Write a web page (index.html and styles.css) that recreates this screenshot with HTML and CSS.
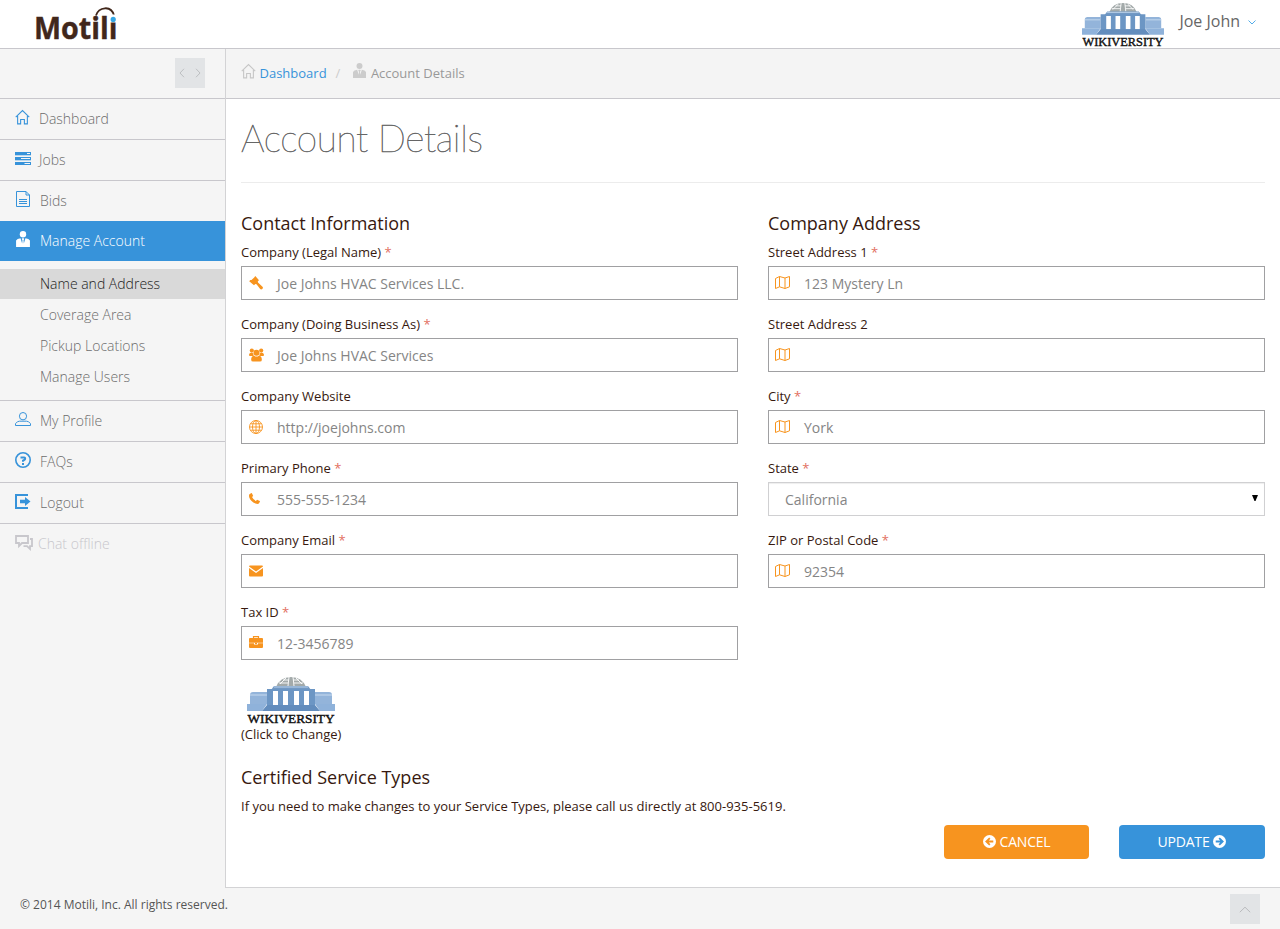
FILE: index.html
```html
<!DOCTYPE html>
<html lang="en">
<head>
<meta charset="utf-8">
<title>Account Details</title>
<link rel="stylesheet" href="styles.css">
</head>
<body>
<svg class="sprite" aria-hidden="true">
  <symbol id="home" viewBox="0 0 16 16"><path d="M.8 8.200 8 1.100l7.200 7.100M2.800 6.800V15.300H6V10.600H10V15.300h3.200V6.800" fill="none" stroke="currentColor" stroke-width="1.150"/></symbol>
  <symbol id="jobs" viewBox="0 0 16 13"><path d="M0 0h16v3H0zM0 5h16v3H0zM0 10h16v3H0z" fill="currentColor"/><path d="M0 3.500h16M0 8.500h16" stroke="currentColor" opacity=".3"/><path d="M12 1.500h3M6 6.500h9M9.500 11.500H15" stroke="#f5f5f5"/></symbol>
  <symbol id="doc" viewBox="0 0 14 16"><path d="M.5.5H10L13.500 4v11.500H.5zM10 .5V4h3.500M3 8.500h8M3 10.500h8M3 12.500h8" fill="none" stroke="currentColor"/></symbol>
  <symbol id="tie" viewBox="0 0 13 15"><circle cx="6.500" cy="3" r="3" fill="currentColor"/><path d="M0 15V9l1.500-1.600 2.700-.7 1.500 5 .3-3-.7-1.200.4-.7h1.600l.4.700-.7 1.200.3 3 1.500-5 2.700.7L13 9v6z" fill="currentColor"/></symbol>
  <symbol id="user" viewBox="0 0 16 14"><ellipse cx="8" cy="4.200" rx="3.600" ry="3.700" fill="none" stroke="currentColor"/><path d="M.5 13.500v-1.800l2-2 2-.5h7l2 .5 2 2v1.800z" fill="none" stroke="currentColor"/></symbol>
  <symbol id="help" viewBox="0 0 16 16"><circle cx="8" cy="8" r="7.200" fill="none" stroke="currentColor" stroke-width="1.600"/><path d="M5.500 5.500h3.700c1.300 0 1.300 2 0 2.500L8 8.600v1.200M8 11v2" fill="none" stroke="currentColor" stroke-width="2"/></symbol>
  <symbol id="exit" viewBox="0 0 16 15"><path d="M13 1H1v13h12" fill="none" stroke="currentColor" stroke-width="2"/><path d="M5 5.800h5V3l5.500 4.500L10 12V9.200H5z" fill="currentColor"/></symbol>
  <symbol id="chat" viewBox="0 0 18 16"><path d="M1 1h12v7H7l-3 3V8H1z" fill="none" stroke="currentColor" stroke-width="1.800"/><path d="M15 4h2v7.200h-2V14l-3-2.800H8.500" fill="none" stroke="currentColor" stroke-width="1.800"/></symbol>
  <symbol id="gavel" viewBox="0 0 14 14"><path d="M6.300 0 10 4.300 8.800 5.300 9 6.500l4.500 4.200q1 1.200-.2 2.300-1.300 1-2.300-.2L7.500 8.300 6.300 8 5 9.300.2 5.300 1.300 4h1.200L5.200 1.400z" fill="currentColor"/></symbol>
  <symbol id="group" viewBox="0 0 16 14"><g fill="currentColor"><circle cx="3" cy="2.300" r="2.200"/><circle cx="13" cy="2.300" r="2.200"/><path d="M0 7.500Q0 4.500 2.300 4.500L4.500 5 5 8H1zM16 7.500Q16 4.500 13.700 4.500L11.500 5 11 8h4z"/><circle cx="8" cy="4.700" r="3.200"/><path d="M2.300 12C2.300 9 3.500 7.700 5.500 7.700Q8 9.500 10.500 7.700C12.500 7.700 13.700 9 13.700 12q0 2-2 2H4.300q-2 0-2-2z"/></g></symbol>
  <symbol id="globe" viewBox="0 0 14 14"><g fill="none" stroke="currentColor" stroke-width=".9"><circle cx="7" cy="7" r="6.500"/><ellipse cx="7" cy="7" rx="3.500" ry="6.500"/><path d="M7 .5v13M.5 7h13M1.500 3.800h11M1.500 10.200h11"/></g></symbol>
  <symbol id="phone" viewBox="0 0 11 11"><path d="M.2 1.400 2.300 0l.6.200L4.200 3 3 4.100Q4.200 6.700 6.900 8l1.200-1.200L10.800 8l.2.600-1.100 2Q8.500 11.300 6.500 10.500 1.800 8.500.3 4.500-.2 2.700.2 1.400z" fill="currentColor"/></symbol>
  <symbol id="mail" viewBox="0 0 14 11"><path d="M0 1q0-1 1-1h12q1 0 1 1L7 6zM0 2.600l7 4.800 7-4.800V10q0 1-1 1H1q-1 0-1-1z" fill="currentColor"/></symbol>
  <symbol id="case" viewBox="0 0 14 12"><path d="M4.500 2V.6h5V2" fill="none" stroke="currentColor" stroke-width="1.200"/><path d="M1 2h12q1 0 1 1v3.800H0V3q0-1 1-1zM0 7.300h5V8.600h4V7.300h5V11q0 1-1 1H1q-1 0-1-1z" fill="currentColor"/><path d="M6 6.700h2V8H6z" fill="currentColor"/></symbol>
  <symbol id="map" viewBox="0 0 15 13"><path d="m.5 2.500 4-2 5.500 1.500 4.500-1.500v10.300L10 12.500l-5.500-1.700-4 1.700zM4.500.5v10.300M10 2v10.500" fill="none" stroke="currentColor"/></symbol>
  <symbol id="right" viewBox="0 0 12 12"><circle cx="6" cy="6" r="6" fill="currentColor"/><path d="M2.500 6h6M5.700 2.900 8.900 6 5.700 9.100" fill="none" stroke="#3793da" stroke-width="1.700"/></symbol>
  <symbol id="left" viewBox="0 0 12 12"><circle cx="6" cy="6" r="6" fill="currentColor"/><path d="M9.500 6h-6M6.300 2.900 3.100 6l3.200 3.100" fill="none" stroke="#f7941f" stroke-width="1.700"/></symbol>
  <symbol id="wiki" viewBox="0 0 88 48">
    <path d="M29 11Q33 1 44 1t15 10z" fill="#a3aaaa"/>
    <path d="M33 8 39 2M41 10l1-9M47 10 46 1M55 8 49 2M32 7h9M47 7h9M36 4h6M46 4h6" stroke="#fff" stroke-width=".9" fill="none"/>
    <path d="M27 10h34l3 4H24z" fill="#7299c4"/><path d="M27 11h34" stroke="#bdd3eb"/>
    <path d="M3 19q0-3 3-3h14v12H3zM85 19q0-3-3-3H68v12H85z" fill="#93b4da"/>
    <path d="M3 19h17M68 19h17" stroke="#c7daef"/>
    <path d="M20 13h48v17H20z" fill="#6c96c4"/>
    <path d="M26 15h5v14h-5zM36 15h5v14h-5zM47 15h5v14h-5zM57 15h5v14h-5z" fill="#fff"/>
    <path d="M0 28h20l-5 7H0zM68 28h20v7H73z" fill="#8fb2da"/>
    <path d="M20 29h48l5 6H15z" fill="#638dbd"/>
    <text x=".5" y="47" textLength="87" lengthAdjust="spacingAndGlyphs" class="wiki-text">WIKIVERSITY</text>
  </symbol>
</svg>

<header class="topbar">
  <svg class="brand" viewBox="0 0 84 36">
    <text x="-2" y="33" textLength="83.500" lengthAdjust="spacingAndGlyphs" class="brand-text">Motili</text>
    <path d="M60 9.500Q62 2.800 69 2.300T78 9.500" fill="none" stroke="#41271b" stroke-width="1.800"/>
    <path d="M73.500 8.500h8v8h-8z" fill="#fff"/><circle cx="77.200" cy="13.400" r="2.600" fill="#34a6e5"/>
  </svg>
  <div class="account">
    <svg class="avatar"><use href="#wiki"/></svg>
    <span class="account-name">Joe John</span>
    <svg class="caret" viewBox="0 0 8 5"><path d="m.5.500 3.500 3.500L7.500.5" fill="none" stroke="#3fa3e6" stroke-width=".9"/></svg>
  </div>
</header>

<div class="shell">
  <aside class="sidebar">
    <div class="toggle-row"><button class="square" type="button" aria-label="Toggle menu"><svg width="22" height="10" viewBox="0 0 22 10"><path d="M5 .8 1 5l4 4.200M17 .8 21 5l-4 4.200" fill="none" stroke="#b9bbbd" stroke-width=".9"/></svg></button></div>
    <nav class="menu">
      <a class="item"><svg class="i16 home"><use href="#home"/></svg>Dashboard</a>
      <a class="item"><svg class="i16 jobs"><use href="#jobs"/></svg>Jobs</a>
      <a class="item bids"><svg class="i16"><use href="#doc"/></svg>Bids</a>
      <a class="item active"><svg class="i16"><use href="#tie"/></svg>Manage Account</a>
      <div class="submenu">
        <a class="sub current">Name and Address</a>
        <a class="sub">Coverage Area</a>
        <a class="sub">Pickup Locations</a>
        <a class="sub">Manage Users</a>
      </div>
      <a class="item"><svg class="i16 profile"><use href="#user"/></svg>My Profile</a>
      <a class="item"><svg class="i16"><use href="#help"/></svg>FAQs</a>
      <a class="item"><svg class="i16 exit"><use href="#exit"/></svg>Logout</a>
      <a class="item chat"><svg class="i16"><use href="#chat"/></svg>Chat offline</a>
    </nav>
  </aside>

  <main class="page">
    <div class="crumbs">
      <svg class="crumb-home"><use href="#home"/></svg><a class="crumb-link">Dashboard</a><span class="slash">/</span><svg class="crumb-tie"><use href="#tie"/></svg><span>Account Details</span>
    </div>
    <div class="content">
      <h1 class="title">Account Details</h1>
      <form class="columns">
        <section>
          <h2 class="heading">Contact Information</h2>
          <div class="field"><label class="label">Company (Legal Name) <b class="req">*</b></label><div class="control"><svg class="fi"><use href="#gavel"/></svg>Joe Johns HVAC Services LLC.</div></div>
          <div class="field"><label class="label">Company (Doing Business As) <b class="req">*</b></label><div class="control"><svg class="fi group"><use href="#group"/></svg>Joe Johns HVAC Services</div></div>
          <div class="field"><label class="label">Company Website</label><div class="control"><svg class="fi"><use href="#globe"/></svg>http://joejohns.com</div></div>
          <div class="field"><label class="label">Primary Phone <b class="req">*</b></label><div class="control"><svg class="fi phone"><use href="#phone"/></svg>555-555-1234</div></div>
          <div class="field"><label class="label">Company Email <b class="req">*</b></label><div class="control"><svg class="fi"><use href="#mail"/></svg></div></div>
          <div class="field"><label class="label">Tax ID <b class="req">*</b></label><div class="control"><svg class="fi case"><use href="#case"/></svg>12-3456789</div></div>
        </section>
        <section>
          <h2 class="heading">Company Address</h2>
          <div class="field"><label class="label">Street Address 1 <b class="req">*</b></label><div class="control"><svg class="fi map"><use href="#map"/></svg>123 Mystery Ln</div></div>
          <div class="field"><label class="label">Street Address 2</label><div class="control"><svg class="fi map"><use href="#map"/></svg></div></div>
          <div class="field"><label class="label">City <b class="req">*</b></label><div class="control"><svg class="fi map"><use href="#map"/></svg>York</div></div>
          <div class="field"><label class="label">State <b class="req">*</b></label><div class="control select">California<svg class="arrow" width="6" height="6" viewBox="0 0 6 6"><path d="M0 0h6L3.500 6h-1z"/></svg></div></div>
          <div class="field"><label class="label">ZIP or Postal Code <b class="req">*</b></label><div class="control"><svg class="fi map"><use href="#map"/></svg>92354</div></div>
        </section>
      </form>
      <div class="company-logo"><svg class="logo-image"><use href="#wiki"/></svg><span>(Click to Change)</span></div>
      <h2 class="heading services">Certified Service Types</h2>
      <p class="note">If you need to make changes to your Service Types, please call us directly at 800-935-5619.</p>
      <div class="actions">
        <button class="btn cancel" type="button"><svg class="bi"><use href="#left"/></svg>CANCEL</button>
        <button class="btn update" type="button">UPDATE<svg class="bi"><use href="#right"/></svg></button>
      </div>
    </div>
  </main>
</div>
<footer class="footer">
  <span>© 2014 Motili, Inc. All rights reserved.</span>
  <button class="square" type="button" aria-label="Back to top"><svg width="12" height="7" viewBox="0 0 12 7"><path d="m.8 6.200 5.200-5 5.200 5" fill="none" stroke="#b4b6b8" stroke-width=".9"/></svg></button>
</footer>
</body>
</html>
```

FILE: styles.css
```css
* { box-sizing: border-box; }
body { margin: 0; height: 929px; display: flex; flex-direction: column; background: #f5f5f5; color: #37190f; font: 13px/18px "Open Sans", sans-serif; overflow: hidden; }
svg { flex: none; display: block; }
.sprite { position: absolute; width: 0; height: 0; }

.topbar { height: 49px; flex: none; display: flex; justify-content: space-between; background: #fff; border-bottom: 1px solid #c8c7cc; }
.brand { width: 84px; height: 36px; margin: 6px 0 0 36px; overflow: visible; }
.brand-text { font: 700 30px "Open Sans", sans-serif; fill: #41271b; stroke: #41271b; stroke-width: .4px; }
.account { display: flex; margin-right: 24px; }
.avatar { width: 82px; height: 45px; margin-top: 2px; }
.wiki-text { font: 400 13.500px "Liberation Serif", serif; fill: #111; stroke: #111; stroke-width: .45px; }
.account-name { margin: 10px 8px 0 15px; font-size: 16px; line-height: 22px; color: #666; }
.caret { width: 8px; height: 5px; margin-top: 20px; }

.shell { flex: 1; display: flex; min-height: 0; }
.sidebar { width: 225px; flex: none; }
.toggle-row { height: 50px; padding: 9px 20px 0 0; display: flex; justify-content: flex-end; border-bottom: 1px solid #c8c7cc; }
.square { width: 30px; height: 30px; padding: 0; border: 0; background: #e2e4e6; display: flex; align-items: center; justify-content: center; }
.item { height: 41px; padding: 0 0 1px 15px; display: flex; align-items: center; gap: 9px; border-bottom: 1px solid #c8c7cc; color: #6c6c6c; font-size: 14px; font-weight: 300; }
.i16 { width: 16px; height: 16px; margin-top: -3px; color: #3793da; }
.home { width: 15px; }
.jobs { height: 13px; margin-top: -2px; margin-right: -1px; }
.profile { height: 14px; }
.exit { height: 15px; }
.item.bids, .item.active { height: 40px; padding-bottom: 1px; border-bottom: 0; }
.item.active { background: #3793da; color: #fff; }
.item.active .i16 { color: #fff; }
.item.chat { border: 0; color: #c8c7cc; gap: 5px; }
.item.chat .i16 { width: 18px; color: #c8c7cc; }
.submenu { height: 140px; padding-top: 8px; display: flex; flex-direction: column; gap: 1px; border-bottom: 1px solid #c8c7cc; }
.sub { height: 30px; padding-left: 40px; font-size: 14px; font-weight: 300; line-height: 30px; color: #6c6c6c; }
.sub.current { background: #d9d9d9; color: #222; }

.page { flex: 1; border-left: 1px solid #d3d3d5; border-bottom: 1px solid #d3d3d5; background: #fff; }
.crumbs { height: 50px; padding: 0 0 1px 15px; display: flex; align-items: center; background: #f4f4f4; border-bottom: 1px solid #c8c7cc; color: #999; }
.crumb-home { width: 15px; height: 16px; margin: -4px 3.500px 0 0; color: #c6c6c6; }
.crumb-link { color: #3793da; }
.slash { margin: 0 12.500px 0 9px; color: #ccc; }
.crumb-tie { width: 13px; height: 15px; margin: -5px 5px 0 0; color: #ccc; }
.content { padding: 0 15px; }
.title { height: 84px; margin: 0; padding-top: 15px; border-bottom: 1px solid #ececec; font: 200 37px/48px Lato, sans-serif; letter-spacing: -.38px; color: #555; -webkit-text-stroke: .55px #666; }
.columns { height: 480px; padding-top: 29px; display: grid; grid-template-columns: 1fr 1fr; gap: 30px; }
.heading { margin: 0; font-size: 18px; font-weight: 400; line-height: 22px; }
.field { height: 72px; padding-top: 9px; }
.label { display: block; height: 23px; line-height: 18px; }
.req { font-weight: 400; color: #e2705f; }
.control { height: 34px; padding: 1px 0 0 7px; display: flex; align-items: center; border: 1px solid #a0a0a2; color: #858585; font-size: 14px; }
.fi { width: 14px; height: 14px; margin: 0 14px 1px 0; color: #f7941f; }
.fi.group { width: 15px; margin-right: 13px; }
.fi.phone { width: 11px; height: 11px; margin: 0 17px 3px 0; }
.fi.case { height: 12px; margin-bottom: 4px; }
.fi.map { width: 15px; height: 13px; margin: 0 14px 2px -1px; }
.control.select { padding: 1px 6px 0 16px; justify-content: space-between; border-color: #d0d0d2; box-shadow: inset 0 1px 1px #eee; }
.arrow { margin-bottom: 3px; }
.company-logo { height: 81px; padding-top: 13px; }
.logo-image { width: 88px; height: 48px; margin: 0 0 1px 6px; }
.services { margin-top: 22px; }
.note { margin: 9px 0 10px; }
.actions { display: flex; justify-content: flex-end; gap: 30px; }
.btn { width: 145px; height: 34px; padding: 0 0 1px; display: flex; align-items: center; justify-content: center; border: 0; border-radius: 4px; color: #fff; font: 14px "Open Sans", sans-serif; letter-spacing: -.2px; gap: 4px; }
.bi { width: 13px; height: 13px; }
.cancel { background: #f7941f; }
.update { width: 146px; background: #3793da; }
.footer { height: 41px; flex: none; padding: 6px 20px 0; display: flex; justify-content: space-between; font-size: 12px; line-height: 21px; color: #555; }
```
